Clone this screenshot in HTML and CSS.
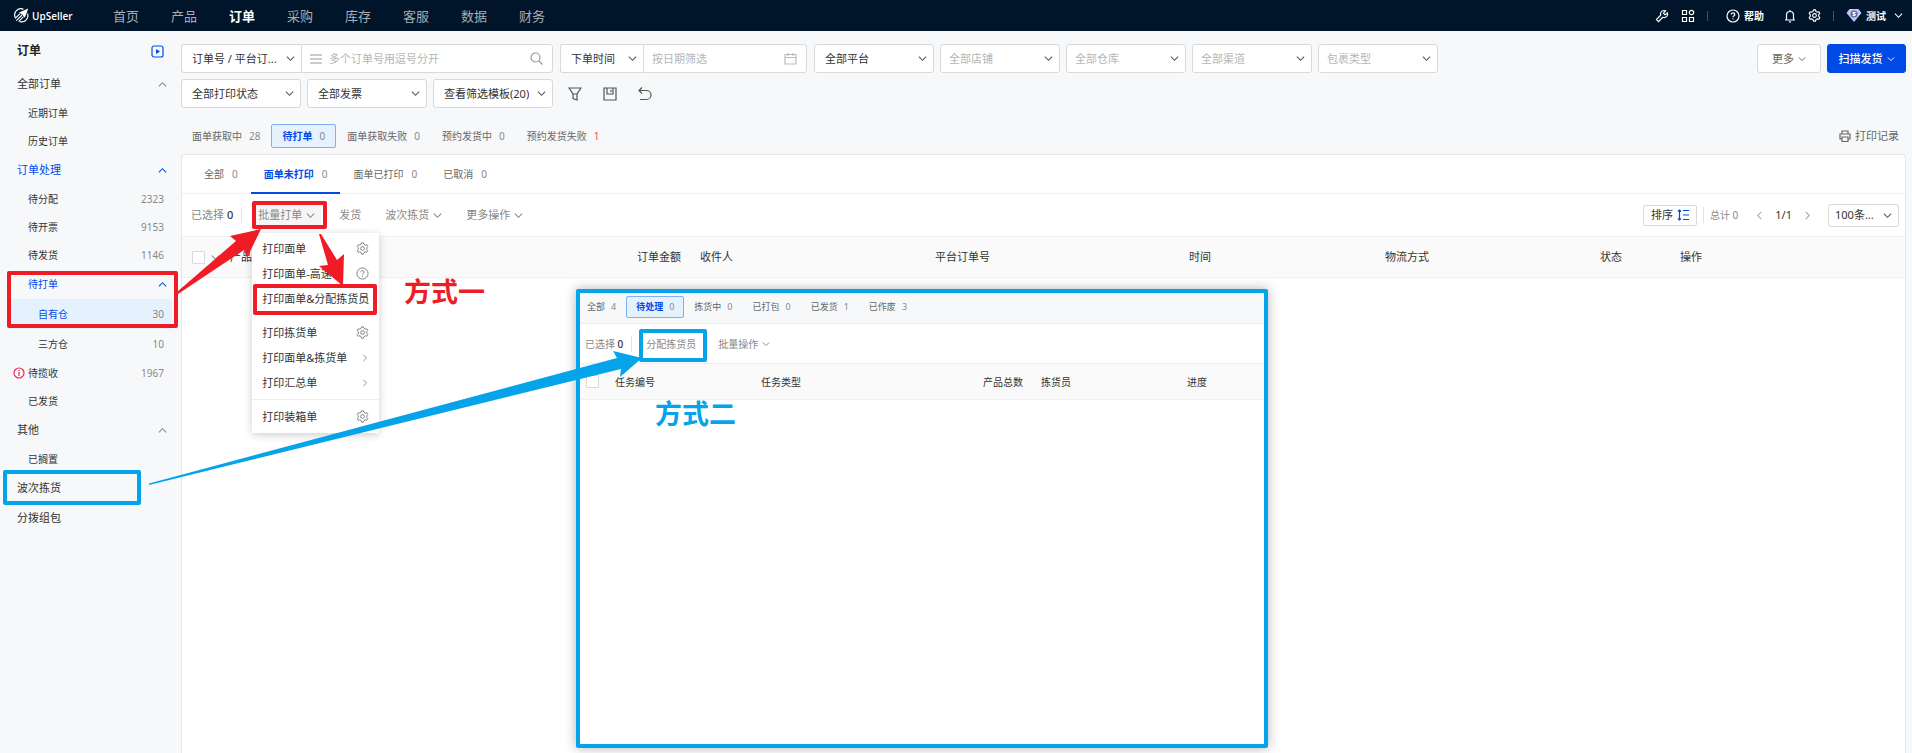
FILE: index.html
```html
<!DOCTYPE html>
<html lang="zh-CN">
<head>
    <meta charset="UTF-8">
    <meta name="viewport" content="width=device-width, initial-scale=1.0">
    <title>UpSeller - 订单</title>
    <link rel="stylesheet" href="styles.css">
</head>
<body>

    <!-- shared icons -->
    <svg class="sprite" aria-hidden="true">
        <symbol id="down" viewBox="0 0 10 10"><path d="M1 3l4 4 4-4"/></symbol>
        <symbol id="up" viewBox="0 0 10 10"><path d="M1 7l4-4 4 4"/></symbol>
        <symbol id="right" viewBox="0 0 10 10"><path d="M3 1l4 4-4 4"/></symbol>
        <symbol id="left" viewBox="0 0 10 10"><path d="M7 1L3 5l4 4"/></symbol>
        <symbol id="gear" viewBox="0 0 14 14"><path d="M5.4 2.6L6 .9h2l.6 1.7 1.3.8 1.8-.4 1 1.8-1.2 1.4v1.6l1.2 1.4-1 1.8-1.8-.4-1.3.8L8 13.1H6l-.6-1.7-1.3-.8-1.8.4-1-1.8 1.2-1.4V6.2L1.3 4.8l1-1.8 1.8.4z"/><circle cx="7" cy="7" r="2"/></symbol>
        <symbol id="help" viewBox="0 0 14 14"><circle cx="7" cy="7" r="6"/><path d="M5.2 5.6c0-2.5 3.6-2.3 3.6-.1C8.8 6.8 7 6.7 7 8.3M7 9.6v1"/></symbol>
    </svg>

    <header class="topbar">
        <a href="#" class="logo">
            <svg width="15" height="15" viewBox="0 0 15 15"><path d="M9.5 1.2A6.3 6.3 0 0 0 1.8 10.500M13.500 5.500A6.300 6.300 0 0 1 6 13.700"/><path d="M2.300 12.700L8 7M4.600 13.700L9.500 8.700M2 9.600L6 5.600"/><path class="solid" d="M5 4.500L14.300.500 10.800 9.800 8.500 6.800z"/></svg>
            <span>UpSeller</span>
        </a>
        <nav class="main-nav">
            <a href="#">首页</a>
            <a href="#">产品</a>
            <a href="#" class="active">订单</a>
            <a href="#">采购</a>
            <a href="#">库存</a>
            <a href="#">客服</a>
            <a href="#">数据</a>
            <a href="#">财务</a>
        </nav>
        <div class="top-tools">
            <button aria-label="工具"><svg width="14" height="14" viewBox="0 0 14 14"><path d="M9 1.500a3.500 3.500 0 0 0-3.300 4.700L1.500 10.600l2 2 4.300-4.300A3.500 3.500 0 0 0 12.500 4L10 5.800 8.400 4.200 10.500 1.800z"/></svg></button>
            <button aria-label="应用"><svg width="14" height="14" viewBox="0 0 14 14"><path d="M1.500 1.500h4v4h-4zM1.500 8.500h4v4h-4zM8.500 8.500h4v4h-4z"/><circle cx="10.500" cy="3.500" r="2.200"/></svg></button>
            <i class="sep"></i>
            <a href="#" class="help"><svg width="14" height="14"><use href="#help"/></svg>帮助</a>
            <button aria-label="通知"><svg width="12" height="14" viewBox="0 0 12 14"><path d="M1 11h10M2.500 11V6a3.500 3.500 0 0 1 7 0v5M6 1v1.500M5 12.800h2"/></svg></button>
            <button aria-label="设置"><svg width="13" height="13"><use href="#gear"/></svg></button>
            <i class="sep"></i>
            <button class="user"><svg width="16" height="15" viewBox="0 0 16 15"><path class="gem" d="M3.500 1h9L15.500 5 8 14 .5 5z"/><circle class="gem-dot" cx="8" cy="6" r="3.500"/><path d="M9.500 4.800c-.8-.8-2.800-.5-2.500.5.200.8 2 .5 2.200 1.400.200 1-1.800 1.200-2.600.4"/></svg>测试<svg class="caret" width="9" height="9"><use href="#down"/></svg></button>
        </div>
    </header>

    <div class="layout">
        <aside class="sidebar">
            <div class="side-title"><h1>订单</h1><button aria-label="收起"><svg width="13" height="13" viewBox="0 0 13 13"><rect x="1" y="1" width="11" height="11" rx="2"/><path class="solid" d="M5 4l4 2.500L5 9z"/></svg></button></div>
            <ul>
                <li class="group"><a href="#">全部订单<svg width="9" height="9"><use href="#up"/></svg></a></li>
                <li><a href="#">近期订单</a></li>
                <li><a href="#">历史订单</a></li>
                <li class="group open"><a href="#">订单处理<svg width="9" height="9"><use href="#up"/></svg></a></li>
                <li><a href="#">待分配<span>2323</span></a></li>
                <li><a href="#">待开票<span>9153</span></a></li>
                <li><a href="#">待发货<span>1146</span></a></li>
                <li class="branch open"><a href="#">待打单<svg width="9" height="9"><use href="#up"/></svg></a></li>
                <li class="leaf current"><a href="#">自有仓<span>30</span></a></li>
                <li class="leaf"><a href="#">三方仓<span>10</span></a></li>
                <li class="warn"><a href="#"><svg width="12" height="12" viewBox="0 0 12 12"><circle cx="6" cy="6" r="5"/><path d="M6 3v1M6 5v4"/></svg>待揽收<span>1967</span></a></li>
                <li><a href="#">已发货</a></li>
                <li class="group"><a href="#">其他<svg width="9" height="9"><use href="#up"/></svg></a></li>
                <li><a href="#">已搁置</a></li>
                <li class="group"><a href="#">波次拣货</a></li>
                <li class="group"><a href="#">分拨组包</a></li>
            </ul>
        </aside>

        <main class="content">
            <div class="filters">
                <div class="joined">
                    <select class="w120" aria-label="搜索类型"><option>订单号 / 平台订...</option></select>
                    <label class="field search">
                        <svg width="12" height="12" viewBox="0 0 12 12"><path d="M0 2h12M0 6h12M0 10h12"/></svg>
                        <input type="text" placeholder="多个订单号用逗号分开">
                        <svg width="13" height="13" viewBox="0 0 13 13"><circle cx="5.500" cy="5.500" r="4.500"/><path d="M9 9l3.500 3.500"/></svg>
                    </label>
                </div>
                <div class="joined">
                    <select class="w82" aria-label="时间类型"><option>下单时间</option></select>
                    <label class="field date">
                        <input type="text" placeholder="按日期筛选">
                        <svg width="13" height="13" viewBox="0 0 13 13"><path d="M1 2.500h11v9.500H1zM1 5.500h11M4 1v3M9 1v3"/></svg>
                    </label>
                </div>
                <select class="w120" aria-label="平台"><option>全部平台</option></select>
                <select class="w120 empty" aria-label="店铺"><option>全部店铺</option></select>
                <select class="w120 empty" aria-label="仓库"><option>全部仓库</option></select>
                <select class="w120 empty" aria-label="渠道"><option>全部渠道</option></select>
                <select class="w120 empty" aria-label="包裹类型"><option>包裹类型</option></select>
                <div class="actions">
                    <button class="btn">更多<svg width="8" height="8"><use href="#down"/></svg></button>
                    <button class="btn primary">扫描发货<svg width="8" height="8"><use href="#down"/></svg></button>
                </div>
            </div>
            <div class="filters">
                <select class="w120" aria-label="打印状态"><option>全部打印状态</option></select>
                <select class="w120" aria-label="发票"><option>全部发票</option></select>
                <select class="w120" aria-label="筛选模板"><option>查看筛选模板(20)</option></select>
                <div class="icon-row">
                    <button aria-label="筛选"><svg width="14" height="14" viewBox="0 0 14 14"><path d="M1 1h12L9 7v6l-4-1.500V7zM5 7h4"/></svg></button>
                    <button aria-label="保存"><svg width="14" height="14" viewBox="0 0 14 14"><path d="M1 1h12v12H1zM4 1v6h6V1M8 3v2"/></svg></button>
                    <button aria-label="重置"><svg width="14" height="14" viewBox="0 0 14 14"><path d="M4 .500L1 3.500l3 3M1 3.500h7.500a4.500 4.500 0 0 1 0 9H2"/></svg></button>
                </div>
            </div>

            <div class="status-tabs">
                <a href="#">面单获取中<span>28</span></a>
                <a href="#" class="active">待打单<span>0</span></a>
                <a href="#">面单获取失败<span>0</span></a>
                <a href="#">预约发货中<span>0</span></a>
                <a href="#">预约发货失败<span class="red">1</span></a>
                <a href="#" class="print-log"><svg width="12" height="12" viewBox="0 0 12 12"><path d="M3 4V1h6v3M3 9H1V4h10v5H9M3 7h6v4.500H3z"/></svg>打印记录</a>
            </div>

            <section class="card">
                <div class="sub-tabs">
                    <a href="#">全部<span>0</span></a>
                    <a href="#" class="active">面单未打印<span>0</span></a>
                    <a href="#">面单已打印<span>0</span></a>
                    <a href="#">已取消<span>0</span></a>
                </div>
                <div class="toolbar">
                    <span class="picked">已选择 <b>0</b></span>
                    <div class="menu-wrap">
                        <button class="link batch">批量打单<svg width="9" height="9"><use href="#down"/></svg></button>
                        <div class="menu">
                            <button>打印面单<svg width="13" height="13"><use href="#gear"/></svg></button>
                            <button>打印面单-高速<svg width="13" height="13"><use href="#help"/></svg></button>
                            <button>打印面单&amp;分配拣货员</button>
                            <hr class="blank">
                            <button>打印拣货单<svg width="13" height="13"><use href="#gear"/></svg></button>
                            <button>打印面单&amp;拣货单<svg width="8" height="8"><use href="#right"/></svg></button>
                            <button>打印汇总单<svg width="8" height="8"><use href="#right"/></svg></button>
                            <hr>
                            <button>打印装箱单<svg width="13" height="13"><use href="#gear"/></svg></button>
                        </div>
                    </div>
                    <button class="link">发货</button>
                    <button class="link">波次拣货<svg width="9" height="9"><use href="#down"/></svg></button>
                    <button class="link">更多操作<svg width="9" height="9"><use href="#down"/></svg></button>
                    <div class="pager">
                        <button class="sort">排序<svg width="12" height="12" viewBox="0 0 12 12"><path d="M2.500 1v10M1 2.500L2.500 1 4 2.500M1 9.500L2.500 11 4 9.500M6 1.500h6M6 6h6M6 10.500h6"/></svg></button>
                        <span class="total">总计 0</span>
                        <button aria-label="上一页"><svg width="9" height="9"><use href="#left"/></svg></button>
                        <span>1/1</span>
                        <button aria-label="下一页"><svg width="9" height="9"><use href="#right"/></svg></button>
                        <select aria-label="每页条数"><option>100条...</option></select>
                    </div>
                </div>
                <table class="orders">
                    <thead>
                        <tr>
                            <th><span><input type="checkbox" aria-label="全选"><svg width="9" height="9"><use href="#down"/></svg>产品</span></th>
                            <th class="amount">订单金额</th>
                            <th class="receiver">收件人</th>
                            <th class="number">平台订单号</th>
                            <th class="time">时间</th>
                            <th class="ship">物流方式</th>
                            <th class="state">状态</th>
                            <th class="ops">操作</th>
                        </tr>
                    </thead>
                </table>
            </section>
        </main>
    </div>

    <!-- picking task window -->
    <section class="task-window">
        <div class="task-tabs">
            <a href="#">全部<span>4</span></a>
            <a href="#" class="active">待处理<span>0</span></a>
            <a href="#">拣货中<span>0</span></a>
            <a href="#">已打包<span>0</span></a>
            <a href="#">已发货<span>1</span></a>
            <a href="#">已作废<span>3</span></a>
        </div>
        <div class="task-bar">
            <span class="picked">已选择 <b>0</b></span>
            <button class="link assign">分配拣货员</button>
            <button class="link">批量操作<svg width="8" height="8"><use href="#down"/></svg></button>
        </div>
        <table class="tasks">
            <thead>
                <tr>
                    <th class="check"><input type="checkbox" aria-label="全选任务"></th>
                    <th class="code">任务编号</th>
                    <th class="type">任务类型</th>
                    <th class="count">产品总数</th>
                    <th class="picker">拣货员</th>
                    <th>进度</th>
                </tr>
            </thead>
        </table>
    </section>

    <!-- annotations -->
    <div class="mark mark-menu"></div>
    <div class="mark mark-batch"></div>
    <div class="mark mark-item"></div>
    <div class="mark blue-mark mark-wave"></div>
    <div class="mark blue-mark mark-assign"></div>
    <svg class="arrows" width="700" height="520" viewBox="0 0 700 520" aria-hidden="true">
        <path class="red-fill" d="M177 292L236 241 230 236 261 229 247 258 244 250 178 294z"/>
        <path class="red-fill" d="M319 234h2L337 260l7-6-1 32-24-20 9-1z"/>
        <path class="blue-fill" d="M149 483.500L617 358l-4-7 29 7-22 19 1-8L149 485z"/>
    </svg>
    <strong class="note note-one">方式一</strong>
    <strong class="note note-two">方式二</strong>

</body>
</html>
```
FILE: styles.css
```css
* {
    box-sizing: border-box;
}
body {
    margin: 0;
    min-height: 100vh;
    display: flex;
    flex-direction: column;
    position: relative;
    background: #f7f8fa;
    color: #333;
    font-family: "Noto Sans", "Noto Sans CJK SC", sans-serif;
    font-size: 11px;
    line-height: 16px;
}
a {
    color: inherit;
    text-decoration: none;
}
button, input, select {
    font: inherit;
    color: inherit;
    margin: 0;
}
button {
    display: inline-flex;
    align-items: center;
    background: none;
    border: none;
    padding: 0;
    cursor: pointer;
}
svg {
    fill: none;
    stroke: currentColor;
    stroke-width: 1.2;
    flex-shrink: 0;
}
.sprite {
    position: absolute;
    width: 0;
    height: 0;
}
.solid {
    fill: currentColor;
    stroke: none;
}

/* top bar */
.topbar {
    display: flex;
    align-items: center;
    height: 31px;
    padding: 0 9px 0 14px;
    background: #001529;
    color: #fff;
}
.logo {
    display: flex;
    align-items: center;
    gap: 3px;
    width: 99px;
    font-size: 10px;
    font-family: "Open Sans", sans-serif;
    font-weight: 600;
}
.main-nav {
    display: flex;
    gap: 32px;
    font-size: 13px;
    color: #a6adb4;
}
.main-nav .active {
    color: #fff;
    font-weight: bold;
}
.top-tools {
    display: flex;
    align-items: center;
    gap: 12px;
    margin-left: auto;
    font-size: 10px;
    font-weight: bold;
}
.sep {
    width: 1px;
    height: 10px;
    background: #46535f;
}
.help, .user {
    display: flex;
    align-items: center;
    gap: 4px;
}
.help {
    margin: 0 8px 0 6px;
}
.caret {
    margin-left: 4px;
}
.gem {
    fill: #c3c4ec;
    stroke: none;
}
.gem-dot {
    fill: #5568a8;
    stroke: none;
}

/* sidebar */
.layout {
    display: flex;
    flex: 1;
}
.sidebar {
    width: 181px;
    flex-shrink: 0;
    padding: 5px 9px 0 9px;
}
.side-title {
    display: flex;
    align-items: center;
    justify-content: space-between;
    height: 30px;
    padding: 0 8px 0 8px;
    color: #004be8;
}
.side-title h1 {
    margin: 0;
    font-size: 12px;
    color: #222;
}
.sidebar ul {
    list-style: none;
    margin: 3px 0 0;
    padding: 0;
}
.sidebar a {
    display: flex;
    align-items: center;
    height: 28px;
    padding: 0 8px 0 19px;
    font-size: 10px;
}
.sidebar .group a {
    height: 30px;
    padding-left: 8px;
    font-size: 11px;
}
.sidebar .branch a, .sidebar .leaf a {
    height: 30px;
}
.sidebar .leaf a {
    padding-left: 29px;
}
.sidebar a span, .sidebar a > svg:last-child {
    margin-left: auto;
    color: #888;
}
.sidebar a > svg:last-child {
    margin-right: -3px;
}
.sidebar .open a, .sidebar .open a > svg:last-child, .sidebar .current a {
    color: #004be8;
}
.sidebar .current a {
    background: #e6f1fe;
}
.sidebar .warn a {
    padding-left: 4px;
    gap: 3px;
}
.warn svg {
    color: #f0274f;
}

/* filters */
.content {
    flex: 1;
    display: flex;
    flex-direction: column;
    min-width: 0;
    padding: 13px 6px 0 0;
}
.filters {
    display: flex;
    gap: 6px;
    margin-bottom: 6px;
}
.joined {
    display: flex;
    margin-right: 1px;
}
select, .field {
    height: 29px;
    border: 1px solid #d9d9d9;
    border-radius: 3px;
    background: #fff;
}
select {
    appearance: none;
    padding: 0 20px 0 10px;
    background: #fff url("data:image/svg+xml,%3Csvg xmlns='http://www.w3.org/2000/svg' width='9' height='9' viewBox='0 0 10 10'%3E%3Cpath d='M1 3l4 4 4-4' fill='none' stroke='%23555' stroke-width='1.2'/%3E%3C/svg%3E") no-repeat right 6px center;
    text-overflow: ellipsis;
}
.empty {
    padding-left: 8px;
    color: #b5b5b5;
}
.w120 {
    width: 120px;
}
.w82 {
    width: 83px;
}
.joined select {
    border-radius: 3px 0 0 3px;
    border-right: none;
}
.field {
    display: flex;
    align-items: center;
    border-radius: 0 3px 3px 0;
    padding: 0 9px 0 8px;
    gap: 7px;
    color: #999;
}
.search {
    width: 252px;
}
.date {
    width: 164px;
}
.field input {
    flex: 1;
    min-width: 0;
    border: none;
    outline: none;
    padding: 0;
    background: none;
    color: #333;
}
.field input::placeholder {
    color: #b5b5b5;
    opacity: 1;
}
.date svg {
    color: #bbb;
}
.actions {
    display: flex;
    gap: 6px;
    margin-left: auto;
}
.btn {
    justify-content: center;
    gap: 4px;
    width: 64px;
    height: 29px;
    border: 1px solid #d9d9d9;
    border-radius: 3px;
    background: #fff;
    color: #666;
}
.btn.primary {
    width: 79px;
    border-color: #004be8;
    background: #004be8;
    color: #fff;
    font-weight: 500;
}
.icon-row {
    display: flex;
    gap: 21px;
    padding-left: 9px;
    color: #555;
}

/* tabs over the card */
.status-tabs {
    display: flex;
    align-items: center;
    height: 24px;
    margin: 10px 6px 6px 0;
    font-size: 10px;
    color: #666;
}
.status-tabs a {
    display: flex;
    align-items: center;
    height: 24px;
    padding: 0 10px;
    border: 1px solid transparent;
    border-radius: 2px;
}
.status-tabs span, .sub-tabs span, .task-tabs span {
    margin-left: 7px;
    color: #888;
    font-weight: normal;
}
.status-tabs .active, .task-tabs .active {
    border-color: #7db0f8;
    background: #e6f1fe;
    color: #004be8;
    font-weight: bold;
}
.status-tabs .red {
    color: #f5474f;
}
.status-tabs .print-log {
    gap: 4px;
    margin-left: auto;
    padding: 0;
    font-size: 11px;
}

/* main card */
.card {
    flex: 1;
    border: 1px solid #e6e6e8;
    border-bottom: none;
    border-radius: 4px 4px 0 0;
    background: #fff;
}
.sub-tabs {
    display: flex;
    height: 39px;
    padding: 0 9px;
    border-bottom: 1px solid #f0f0f0;
    font-size: 10px;
    color: #666;
}
.sub-tabs a {
    display: flex;
    align-items: center;
    height: 39px;
    padding: 0 13px;
    border-bottom: 2px solid transparent;
}
.sub-tabs span {
    margin-left: 8px;
}
.sub-tabs .active {
    border-color: #004be8;
    color: #004be8;
    font-weight: bold;
}
.toolbar {
    display: flex;
    align-items: center;
    height: 42px;
    padding: 0 6px 0 9px;
    color: #888;
}
.picked {
    padding-right: 8px;
    border-right: 1px solid #e3e3e3;
}
.picked b {
    color: #333;
    font-weight: 500;
}
.link {
    gap: 4px;
    padding: 0 12px;
}
.batch {
    height: 20px;
    margin: 0 6px 0 10px;
    padding: 0 6px;
    background: #f5f5f5;
}
.pager {
    display: flex;
    align-items: center;
    gap: 11px;
    margin-left: auto;
    color: #333;
}
.pager button {
    color: #aaa;
}
.pager .sort {
    gap: 4px;
    height: 21px;
    margin-right: -5px;
    padding: 0 7px;
    border: 1px solid #d9d9d9;
    border-radius: 2px;
    color: #333;
}
.pager .sort svg {
    color: #004be8;
}
.pager .total {
    padding: 0 6px;
    border-left: 1px solid #e3e3e3;
    font-size: 10px;
    color: #888;
}
.pager select {
    width: 71px;
    height: 23px;
    margin-left: 5px;
    padding: 0 18px 0 6px;
}
table {
    width: 100%;
    border-collapse: collapse;
    table-layout: fixed;
}
th {
    padding: 0;
    border-top: 1px solid #f0f0f0;
    border-bottom: 1px solid #f0f0f0;
    background: #fafafa;
    text-align: left;
    font-weight: normal;
}
.orders th {
    height: 41px;
}
.orders th span {
    display: flex;
    align-items: center;
    gap: 6px;
    padding-left: 10px;
}
th svg {
    color: #888;
    margin-right: 4px;
}
input[type="checkbox"] {
    appearance: none;
    width: 13px;
    height: 13px;
    border: 1px solid #d9d9d9;
    border-radius: 1px;
    background: #fff;
}
.orders .amount {
    width: 63px;
}
.orders .receiver {
    width: 235px;
}
.orders .number {
    width: 254px;
}
.orders .time {
    width: 196px;
}
.orders .ship {
    width: 215px;
}
.orders .state {
    width: 80px;
}
.orders .ops {
    width: 225px;
}

/* batch print drop-down */
.menu-wrap {
    position: relative;
}
.menu {
    position: absolute;
    z-index: 2;
    top: 28px;
    left: 10px;
    width: 127px;
    padding: 3px 0 4px;
    border-radius: 2px;
    background: #fff;
    box-shadow: 0 2px 8px rgba(0, 0, 0, 0.2);
    color: #333;
}
.menu button {
    justify-content: space-between;
    width: 100%;
    height: 25px;
    padding: 0 10px;
    white-space: nowrap;
}
.menu svg {
    color: #777;
    stroke-width: 1;
}
.menu hr {
    margin: 4px 0;
    border: none;
    border-top: 1px solid #eee;
}
.menu .blank {
    border-color: transparent;
}

/* task window */
.task-window {
    position: absolute;
    z-index: 3;
    left: 576px;
    top: 289px;
    width: 692px;
    height: 459px;
    border: 4px solid #04a3ea;
    border-radius: 2px;
    background: #fff;
    box-shadow: 0 0 12px rgba(0, 0, 0, 0.3);
    font-size: 10px;
}
.task-tabs {
    display: flex;
    height: 31px;
    padding: 3px 0 0;
    border-bottom: 1px solid #eee;
    background: #f7f8fa;
    font-size: 9px;
    color: #666;
}
.task-tabs a {
    display: flex;
    align-items: center;
    height: 22px;
    padding: 0 9px;
    border: 1px solid transparent;
    border-radius: 2px;
}
.task-tabs a:first-child {
    padding-left: 6px;
}
.task-tabs span {
    margin-left: 6px;
}
.task-bar {
    display: flex;
    align-items: center;
    height: 39px;
    padding-left: 5px;
    color: #888;
}
.task-bar .assign {
    padding: 0 10px 0 14px;
}
.tasks th {
    height: 36px;
}
.tasks .check {
    width: 35px;
    padding: 4px 0 0 6px;
}
.tasks .code {
    width: 146px;
}
.tasks .type {
    width: 222px;
}
.tasks .count {
    width: 58px;
}
.tasks .picker {
    width: 146px;
}

/* annotations */
.mark {
    position: absolute;
    z-index: 4;
    border: 4px solid #ef1c25;
    border-radius: 2px;
    pointer-events: none;
}
.blue-mark {
    border-color: #04a3ea;
}
.mark-menu {
    left: 7px;
    top: 271px;
    width: 171px;
    height: 57px;
}
.mark-batch {
    left: 252px;
    top: 201px;
    width: 75px;
    height: 28px;
}
.mark-item {
    left: 253px;
    top: 284px;
    width: 124px;
    height: 31px;
}
.mark-wave {
    left: 3px;
    top: 470px;
    width: 138px;
    height: 35px;
}
.mark-assign {
    left: 639px;
    top: 329px;
    width: 68px;
    height: 33px;
}
.arrows {
    position: absolute;
    z-index: 5;
    left: 0;
    top: 0;
    stroke: none;
    pointer-events: none;
}
.red-fill {
    fill: #ef1c25;
}
.blue-fill {
    fill: #04a3ea;
}
.note {
    position: absolute;
    z-index: 5;
    font-size: 27px;
    line-height: 32px;
}
.note-one {
    left: 404px;
    top: 276px;
    color: #ef1c25;
}
.note-two {
    left: 655px;
    top: 398px;
    color: #04a3ea;
}
```
